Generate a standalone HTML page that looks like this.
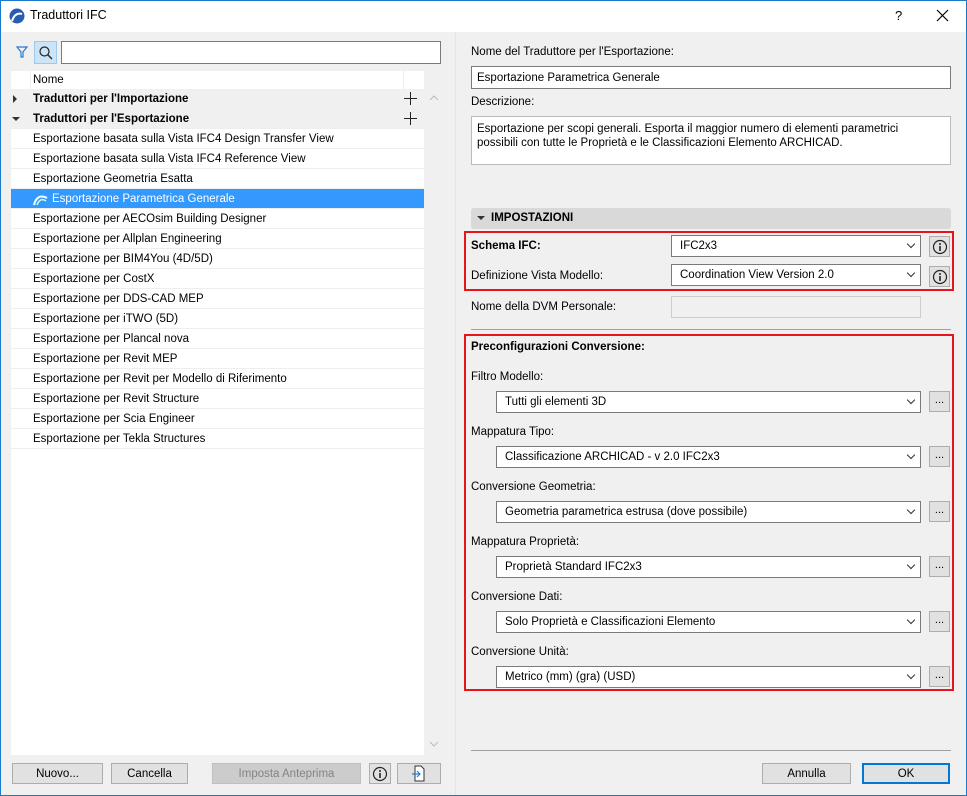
<!DOCTYPE html>
<html><head><meta charset="utf-8"><style>
*{box-sizing:border-box;margin:0;padding:0}
body{width:967px;height:796px;overflow:hidden;font-family:"Liberation Sans",sans-serif;font-size:11.5px;color:#000;background:#f0f0f0;position:relative}
.a{position:absolute}
#bd{position:absolute;left:0;top:0;width:967px;height:796px;border:1px solid #1979ca;z-index:5;pointer-events:none}
.row{position:absolute;left:11px;width:413px;height:20px;line-height:21px;padding-left:22px;border-bottom:1px solid #eee;background:#fff;white-space:nowrap}
.sel{position:absolute;background:#fff;border:1px solid #7a7a7a;height:22px;line-height:21px;padding-left:8px;white-space:nowrap}
.sel:after{content:"";position:absolute;right:6px;top:5px;width:5px;height:5px;border-right:1px solid #333;border-bottom:1px solid #333;transform:rotate(45deg)}
.btn{position:absolute;background:#e1e1e1;border:1px solid #adadad;height:21px;line-height:20px;text-align:center}
.ib{position:absolute;width:21px;height:21px;background:#e1e1e1;border:1px solid #adadad}
.ib svg{position:absolute;left:2px;top:2px}
.dots{position:absolute;width:21px;height:21px;background:#e1e1e1;border:1px solid #adadad;text-align:center;line-height:17px;font-size:11px}
.lbl{position:absolute;white-space:nowrap}
.red{position:absolute;border:2px solid #e8141b}
</style></head><body>
<div id="bd"></div>
<div class="a" style="left:0;top:0;width:967px;height:32px;background:#fff"></div>
<svg class="a" style="left:9px;top:8px" width="16" height="16"><circle cx="8" cy="8" r="7.5" fill="#2a5db0"/><path d="M3 13 Q6 4 13 6" stroke="#fff" stroke-width="2" fill="none"/></svg>
<div class="lbl" style="left:30px;top:8px;font-size:12.5px">Traduttori IFC</div>
<div class="lbl" style="left:895px;top:8px;font-size:13px">?</div>
<svg class="a" style="left:936px;top:9px" width="13" height="13"><path d="M1 1L12 12M12 1L1 12" stroke="#000" stroke-width="1.2"/></svg>

<svg class="a" style="left:15px;top:45px" width="14" height="14"><path d="M2 2H12L8 7V12H6V7Z" fill="none" stroke="#2a7ad0" stroke-width="1.2"/></svg>
<div class="a" style="left:34px;top:41px;width:23px;height:23px;background:#cce4f7;border:1px solid #99c9ef"></div>
<svg class="a" style="left:38px;top:45px" width="16" height="16"><circle cx="6.5" cy="6.5" r="4.5" fill="none" stroke="#222" stroke-width="1.2"/><path d="M10 10L14 14" stroke="#222" stroke-width="1.3"/></svg>
<div class="a" style="left:61px;top:41px;width:380px;height:23px;background:#fff;border:1px solid #7a7a7a"></div>

<div class="a" style="left:11px;top:71px;width:413px;height:684px;background:#fff"></div>
<div class="a" style="left:30px;top:71px;width:1px;height:18px;background:#eee"></div>
<div class="a" style="left:403px;top:71px;width:1px;height:18px;background:#eee"></div>
<div class="lbl" style="left:33px;top:74px">Nome</div>
<div class="row" style="top:89px;background:#f0f0f0;font-weight:bold">Traduttori per l'Importazione</div>
<div class="row" style="top:109px;background:#f0f0f0;font-weight:bold">Traduttori per l'Esportazione</div>
<div class="a" style="left:13px;top:95px;border-left:4px solid #333;border-top:4px solid transparent;border-bottom:4px solid transparent"></div>
<div class="a" style="left:12px;top:117px;border-top:4px solid #333;border-left:4px solid transparent;border-right:4px solid transparent"></div>
<svg class="a" style="left:404px;top:92px" width="13" height="13"><path d="M6.5 0V13M0 6.5H13" stroke="#222"/></svg>
<svg class="a" style="left:404px;top:112px" width="13" height="13"><path d="M6.5 0V13M0 6.5H13" stroke="#222"/></svg>
<div class="row" style="top:129px">Esportazione basata sulla Vista IFC4 Design Transfer View</div>
<div class="row" style="top:149px">Esportazione basata sulla Vista IFC4 Reference View</div>
<div class="row" style="top:169px">Esportazione Geometria Esatta</div>
<div class="row" style="top:189px;background:#3399ff;color:#fff;padding-left:41px">Esportazione Parametrica Generale</div>
<svg class="a" style="left:33px;top:192px" width="15" height="15"><path d="M1 13 Q4 1 14 6" stroke="#fff" stroke-width="2" fill="none"/><path d="M4 13 Q7 5 13 9" stroke="#cfe" stroke-width="1.5" fill="none"/></svg>
<div class="row" style="top:209px">Esportazione per AECOsim Building Designer</div>
<div class="row" style="top:229px">Esportazione per Allplan Engineering</div>
<div class="row" style="top:249px">Esportazione per BIM4You (4D/5D)</div>
<div class="row" style="top:269px">Esportazione per CostX</div>
<div class="row" style="top:289px">Esportazione per DDS-CAD MEP</div>
<div class="row" style="top:309px">Esportazione per iTWO (5D)</div>
<div class="row" style="top:329px">Esportazione per Plancal nova</div>
<div class="row" style="top:349px">Esportazione per Revit MEP</div>
<div class="row" style="top:369px">Esportazione per Revit per Modello di Riferimento</div>
<div class="row" style="top:389px">Esportazione per Revit Structure</div>
<div class="row" style="top:409px">Esportazione per Scia Engineer</div>
<div class="row" style="top:429px">Esportazione per Tekla Structures</div>
<svg class="a" style="left:429px;top:95px" width="10" height="6"><path d="M1 5L5 1L9 5" stroke="#bbb" fill="none"/></svg>
<svg class="a" style="left:429px;top:741px" width="10" height="6"><path d="M1 1L5 5L9 1" stroke="#bbb" fill="none"/></svg>

<div class="btn" style="left:12px;top:763px;width:91px">Nuovo...</div>
<div class="btn" style="left:111px;top:763px;width:77px">Cancella</div>
<div class="btn" style="left:212px;top:763px;width:149px;background:#ccc;border-color:#bfbfbf;color:#838383">Imposta Anteprima</div>
<div class="ib" style="left:369px;top:763px;width:22px"><svg width="16" height="16"><circle cx="8" cy="8" r="6.5" fill="none" stroke="#222" stroke-width="1.2"/><circle cx="8" cy="5" r="1" fill="#222"/><path d="M8 7V12" stroke="#222" stroke-width="1.6"/></svg></div>
<div class="btn" style="left:397px;top:763px;width:44px"></div>
<svg class="a" style="left:411px;top:765px" width="16" height="17"><path d="M4 1H10L13 4V16H4Z" fill="#fff" stroke="#333"/><path d="M1 9H9M6 6L9 9L6 12" stroke="#2a7ad0" fill="none" stroke-width="1.2"/></svg>

<div class="a" style="left:444px;top:32px;width:12px;height:763px;background:#f0f0f0;border-right:1px solid #e4e4e4"></div>

<div class="lbl" style="left:471px;top:46px">Nome del Traduttore per l'Esportazione:</div>
<div class="a" style="left:471px;top:66px;width:480px;height:23px;background:#fff;border:1px solid #7a7a7a;padding:5px 5px;line-height:13px">Esportazione Parametrica Generale</div>
<div class="lbl" style="left:471px;top:96px">Descrizione:</div>
<div class="a" style="left:471px;top:116px;width:480px;height:49px;background:#fff;border:1px solid #bbb;padding:5px 20px 0 5px;line-height:14px">Esportazione per scopi generali. Esporta il maggior numero di elementi parametrici possibili con tutte le Proprietà e le Classificazioni Elemento ARCHICAD.</div>

<div class="a" style="left:471px;top:208px;width:480px;height:21px;background:#d9d9d9;border-radius:3px"></div>
<div class="a" style="left:477px;top:216px;border-top:4px solid #333;border-left:4px solid transparent;border-right:4px solid transparent"></div>
<div class="lbl" style="left:491px;top:212px;font-weight:bold">IMPOSTAZIONI</div>

<div class="red" style="left:464px;top:231px;width:490px;height:60px"></div>
<div class="lbl" style="left:471px;top:240px;font-weight:bold">Schema IFC:</div>
<div class="sel" style="left:671px;top:235px;width:250px">IFC2x3</div>
<div class="ib" style="left:929px;top:236px"><svg width="16" height="16"><circle cx="8" cy="8" r="6.5" fill="none" stroke="#222" stroke-width="1.2"/><circle cx="8" cy="5" r="1" fill="#222"/><path d="M8 7V12" stroke="#222" stroke-width="1.6"/></svg></div>
<div class="lbl" style="left:471px;top:270px">Definizione Vista Modello:</div>
<div class="sel" style="left:671px;top:264px;width:250px">Coordination View Version 2.0</div>
<div class="ib" style="left:929px;top:266px"><svg width="16" height="16"><circle cx="8" cy="8" r="6.5" fill="none" stroke="#222" stroke-width="1.2"/><circle cx="8" cy="5" r="1" fill="#222"/><path d="M8 7V12" stroke="#222" stroke-width="1.6"/></svg></div>
<div class="lbl" style="left:471px;top:301px">Nome della DVM Personale:</div>
<div class="a" style="left:671px;top:296px;width:250px;height:22px;border:1px solid #ccc;background:#f0f0f0"></div>
<div class="a" style="left:471px;top:329px;width:480px;height:1px;background:#a0a0a0"></div>

<div class="red" style="left:464px;top:334px;width:490px;height:357px"></div>
<div class="lbl" style="left:471px;top:341px;font-weight:bold">Preconfigurazioni Conversione:</div>
<div class="lbl" style="left:471px;top:371px">Filtro Modello:</div>
<div class="sel" style="left:496px;top:391px;width:425px">Tutti gli elementi 3D</div>
<div class="dots" style="left:929px;top:391px">...</div>
<div class="lbl" style="left:471px;top:426px">Mappatura Tipo:</div>
<div class="sel" style="left:496px;top:446px;width:425px">Classificazione ARCHICAD - v 2.0 IFC2x3</div>
<div class="dots" style="left:929px;top:446px">...</div>
<div class="lbl" style="left:471px;top:481px">Conversione Geometria:</div>
<div class="sel" style="left:496px;top:501px;width:425px">Geometria parametrica estrusa (dove possibile)</div>
<div class="dots" style="left:929px;top:501px">...</div>
<div class="lbl" style="left:471px;top:536px">Mappatura Proprietà:</div>
<div class="sel" style="left:496px;top:556px;width:425px">Proprietà Standard IFC2x3</div>
<div class="dots" style="left:929px;top:556px">...</div>
<div class="lbl" style="left:471px;top:591px">Conversione Dati:</div>
<div class="sel" style="left:496px;top:611px;width:425px">Solo Proprietà e Classificazioni Elemento</div>
<div class="dots" style="left:929px;top:611px">...</div>
<div class="lbl" style="left:471px;top:646px">Conversione Unità:</div>
<div class="sel" style="left:496px;top:666px;width:425px">Metrico (mm) (gra) (USD)</div>
<div class="dots" style="left:929px;top:666px">...</div>

<div class="a" style="left:471px;top:750px;width:480px;height:1px;background:#a0a0a0"></div>
<div class="btn" style="left:762px;top:763px;width:89px">Annulla</div>
<div class="btn" style="left:862px;top:763px;width:88px;border:2px solid #0078d7;line-height:18px">OK</div>
</body></html>
